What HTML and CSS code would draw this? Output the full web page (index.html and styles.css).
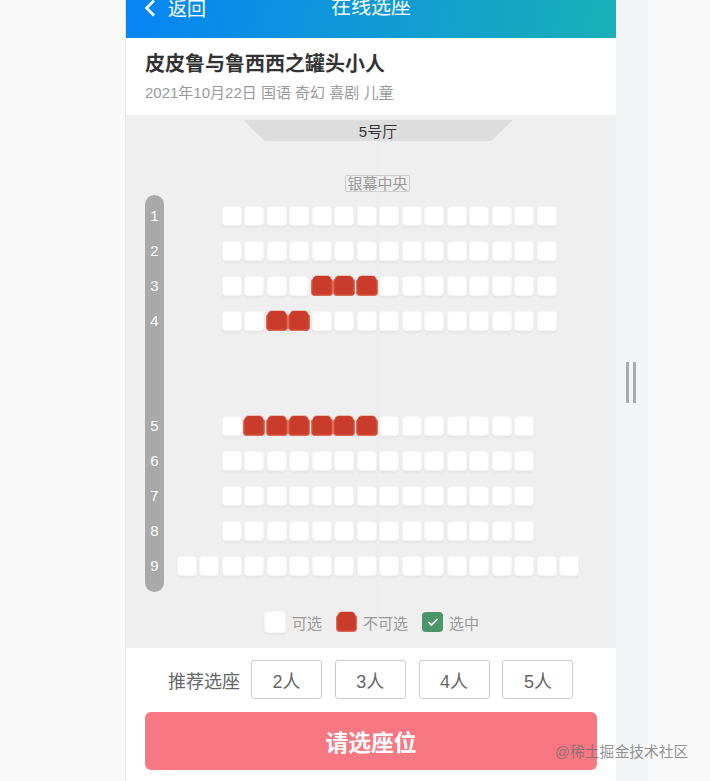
FILE: index.html
```html
<!DOCTYPE html>
<html lang="zh-CN">
  <head>
    <meta charset="UTF-8" />
    <meta name="viewport" content="width=device-width, initial-scale=1.0" />
    <title>在线选座</title>
    <link rel="stylesheet" href="styles.css">
  </head>
  <body>
    <div class="page">
      <div class="phone">
        <header class="top-bar">
          <a class="back" href="#">
            <svg class="back-icon" viewBox="0 0 12 18" width="12" height="18">
              <path d="M10 1.500 2.500 9l7.500 7.500" fill="none" stroke="#fff" stroke-width="2.600" />
            </svg>
            返回
          </a>
          <div class="top-title">在线选座</div>
        </header>

        <section class="movie">
          <h1 class="movie-name">皮皮鲁与鲁西西之罐头小人</h1>
          <p class="movie-info">2021年10月22日 国语 奇幻 喜剧 儿童</p>
        </section>

        <section class="hall">
          <div class="hall-name">5号厅</div>
          <div class="center-line"></div>
          <div class="screen-row"><span class="screen-label">银幕中央</span></div>

          <div class="seat-map">
            <div class="row-numbers">
              <span>1</span><span>2</span><span>3</span><span>4</span>
              <span></span><span></span>
              <span>5</span><span>6</span><span>7</span><span>8</span><span>9</span>
            </div>
            <div class="rows">
              <!-- Row 1 -->
              <div class="row">
                <span class="seat"></span><span class="seat"></span><span class="seat"></span><span class="seat"></span><span class="seat"></span>
                <span class="seat"></span><span class="seat"></span><span class="seat"></span><span class="seat"></span><span class="seat"></span>
                <span class="seat"></span><span class="seat"></span><span class="seat"></span><span class="seat"></span><span class="seat"></span>
              </div>
              <!-- Row 2 -->
              <div class="row">
                <span class="seat"></span><span class="seat"></span><span class="seat"></span><span class="seat"></span><span class="seat"></span>
                <span class="seat"></span><span class="seat"></span><span class="seat"></span><span class="seat"></span><span class="seat"></span>
                <span class="seat"></span><span class="seat"></span><span class="seat"></span><span class="seat"></span><span class="seat"></span>
              </div>
              <!-- Row 3 -->
              <div class="row">
                <span class="seat"></span><span class="seat"></span><span class="seat"></span><span class="seat"></span><span class="seat taken"></span>
                <span class="seat taken"></span><span class="seat taken"></span><span class="seat"></span><span class="seat"></span><span class="seat"></span>
                <span class="seat"></span><span class="seat"></span><span class="seat"></span><span class="seat"></span><span class="seat"></span>
              </div>
              <!-- Row 4 -->
              <div class="row">
                <span class="seat"></span><span class="seat"></span><span class="seat taken"></span><span class="seat taken"></span><span class="seat"></span>
                <span class="seat"></span><span class="seat"></span><span class="seat"></span><span class="seat"></span><span class="seat"></span>
                <span class="seat"></span><span class="seat"></span><span class="seat"></span><span class="seat"></span><span class="seat"></span>
              </div>
              <div class="row"></div>
              <div class="row"></div>
              <!-- Row 5 -->
              <div class="row">
                <span class="seat"></span><span class="seat taken"></span><span class="seat taken"></span><span class="seat taken"></span><span class="seat taken"></span>
                <span class="seat taken"></span><span class="seat taken"></span><span class="seat"></span><span class="seat"></span><span class="seat"></span>
                <span class="seat"></span><span class="seat"></span><span class="seat"></span><span class="seat"></span>
              </div>
              <!-- Row 6 -->
              <div class="row">
                <span class="seat"></span><span class="seat"></span><span class="seat"></span><span class="seat"></span><span class="seat"></span>
                <span class="seat"></span><span class="seat"></span><span class="seat"></span><span class="seat"></span><span class="seat"></span>
                <span class="seat"></span><span class="seat"></span><span class="seat"></span><span class="seat"></span>
              </div>
              <!-- Row 7 -->
              <div class="row">
                <span class="seat"></span><span class="seat"></span><span class="seat"></span><span class="seat"></span><span class="seat"></span>
                <span class="seat"></span><span class="seat"></span><span class="seat"></span><span class="seat"></span><span class="seat"></span>
                <span class="seat"></span><span class="seat"></span><span class="seat"></span><span class="seat"></span>
              </div>
              <!-- Row 8 -->
              <div class="row">
                <span class="seat"></span><span class="seat"></span><span class="seat"></span><span class="seat"></span><span class="seat"></span>
                <span class="seat"></span><span class="seat"></span><span class="seat"></span><span class="seat"></span><span class="seat"></span>
                <span class="seat"></span><span class="seat"></span><span class="seat"></span><span class="seat"></span>
              </div>
              <!-- Row 9 is the long one, it starts two seats further left -->
              <div class="row row-long">
                <span class="seat"></span><span class="seat"></span><span class="seat"></span><span class="seat"></span><span class="seat"></span><span class="seat"></span>
                <span class="seat"></span><span class="seat"></span><span class="seat"></span><span class="seat"></span><span class="seat"></span><span class="seat"></span>
                <span class="seat"></span><span class="seat"></span><span class="seat"></span><span class="seat"></span><span class="seat"></span><span class="seat"></span>
              </div>
            </div>
          </div>

          <div class="legend">
            <div class="legend-item"><span class="seat"></span><span class="legend-text">可选</span></div>
            <div class="legend-item"><span class="seat taken"></span><span class="legend-text">不可选</span></div>
            <div class="legend-item">
              <span class="seat chosen">
                <svg viewBox="0 0 12 10" width="12" height="10">
                  <path d="M1.500 5 4.500 8 10.500 2" fill="none" stroke="#fff" stroke-width="1.600" />
                </svg>
              </span>
              <span class="legend-text">选中</span>
            </div>
          </div>
        </section>

        <section class="bottom">
          <div class="recommend">
            <span class="recommend-label">推荐选座</span>
            <button class="count-btn">2人</button>
            <button class="count-btn">3人</button>
            <button class="count-btn">4人</button>
            <button class="count-btn">5人</button>
          </div>
          <button class="submit-btn">请选座位</button>
        </section>
      </div>

      <div class="side-strip">
        <div class="drag-handle"></div>
      </div>
    </div>

    <div class="watermark">@稀土掘金技术社区</div>
  </body>
</html>
```

FILE: styles.css
```css
* {
  margin: 0;
  padding: 0;
  box-sizing: border-box;
  font-family: "Liberation Sans", "Noto Sans CJK SC", sans-serif;
}

html,
body {
  height: 100%;
  overflow: hidden;
}

body {
  background: #f9f9fa;
}

.page {
  display: flex;
  height: 781px;
  padding-left: 125px;
}

.phone {
  width: 491px;
  height: 781px;
  background: #fff;
  border-left: 1px solid #e9e9e9;
}

/* Top bar, its upper part is scrolled away */
.top-bar {
  position: relative;
  display: flex;
  height: 38px;
  padding-left: 18px;
  overflow: hidden;
  background: linear-gradient(100deg, #0684f6, #19b0b6);
  color: #fff;
  font-size: 19px;
}

.back {
  display: flex;
  align-items: center;
  gap: 12px;
  height: 15px;
  color: #fff;
  text-decoration: none;
}

.back-icon {
  flex: none;
}

.top-title {
  position: absolute;
  top: -4px;
  left: 205px;
  font-size: 20px;
  line-height: 22px;
}

/* Movie info */
.movie {
  height: 77px;
  padding: 12px 19px 0;
}

.movie-name {
  font-size: 20px;
  font-weight: 700;
  line-height: 28px;
  color: #333;
}

.movie-info {
  margin-top: 4px;
  font-size: 15px;
  line-height: 21px;
  color: #999;
}

/* Hall */
.hall {
  position: relative;
  height: 533px;
  padding-top: 5px;
  background: #efefef;
}

.hall-name {
  width: 270px;
  height: 21px;
  margin-left: 117px;
  background: #ddd;
  clip-path: polygon(0 0, 100% 0, 92% 100%, 8% 100%);
  font-size: 15px;
  line-height: 24px;
  text-align: center;
  color: #333;
}

.center-line {
  position: absolute;
  top: 26px;
  bottom: 30px;
  left: 251px;
  border-left: 1px dashed #e9e9e9;
}

.screen-row {
  display: flex;
  margin-top: 34px;
  padding-left: 219px;
}

.screen-label {
  width: 65px;
  height: 17px;
  border: 1px solid #ccc;
  border-radius: 2px;
  font-size: 15px;
  line-height: 15px;
  text-align: center;
  white-space: nowrap;
  color: #999;
}

.seat-map {
  position: relative;
  display: flex;
  margin-top: 3px;
  padding-left: 19px;
}

.row-numbers {
  display: flex;
  flex-direction: column;
  width: 19px;
  height: 397px;
  padding-top: 3px;
  background: #a9a9a9;
  border-radius: 10px;
}

.row-numbers span {
  height: 35px;
  font-size: 15px;
  line-height: 35px;
  text-align: center;
  color: #fff;
}

.rows {
  display: flex;
  flex-direction: column;
  padding-top: 3px;
  padding-left: 58.500px;
}

.row {
  display: flex;
  gap: 4.500px;
  align-items: center;
  height: 35px;
}

.row-long {
  margin-left: -45px;
}

.seat {
  position: relative;
  display: flex;
  flex: none;
  align-items: center;
  justify-content: center;
  width: 18px;
  height: 18px;
  background: #fff;
  border-radius: 3px;
  box-shadow: 0 0 0 1px #f5f5f5, 0 2px 2px 1px #e5e5e5;
}

/* Taken seat: back rest over a wider, lighter base */
.seat.taken {
  width: 22px;
  height: 20px;
  margin: 0 -2px;
  background: none;
  box-shadow: none;
}

.seat.taken::before {
  content: "";
  position: absolute;
  right: 0;
  bottom: 0;
  left: 0;
  height: 16px;
  background: #c93c2b;
  border: 1px solid #dd6a52;
  border-top: none;
  border-radius: 3px 3px 4px 4px;
}

.seat.taken::after {
  content: "";
  position: absolute;
  top: 0;
  right: 2px;
  bottom: 2px;
  left: 2px;
  background: #c93c2b;
  border-radius: 4px;
  box-shadow: 0 0 0 1px rgba(221, 106, 82, 0.35);
}

.seat.chosen {
  width: 21px;
  height: 20px;
  background: #4a9668;
  border-radius: 4px;
  box-shadow: none;
}

/* Legend */
.legend {
  display: flex;
  margin-top: 19px;
  padding-left: 139px;
}

.legend-item {
  display: flex;
  align-items: center;
  height: 22px;
  margin-right: 14px;
}

.legend-item .seat {
  width: 20px;
  height: 20px;
  margin: 0 6px 0 0;
}

.legend-item .seat.taken {
  width: 21px;
}

.legend-item .seat.chosen {
  width: 21px;
}

.legend-text {
  font-size: 15px;
  color: #999;
}

.legend-item:first-child .seat {
  margin-right: 7px;
}

/* Bottom */
.bottom {
  padding: 12px 18px 0 19px;
}

.recommend {
  display: flex;
  align-items: center;
  padding-left: 23px;
}

.recommend-label {
  width: 83px;
  font-size: 18px;
  color: #666;
}

.count-btn {
  width: 71px;
  height: 39px;
  margin-right: 12.800px;
  background: #fff;
  border: 1px solid #ccc;
  border-radius: 3px;
  font-size: 18px;
  color: #666;
}

.submit-btn {
  display: block;
  width: 452px;
  height: 58px;
  margin-top: 13px;
  background: #f77783;
  border: none;
  border-radius: 6px;
  font-size: 22.800px;
  font-weight: 700;
  color: #fff;
}

/* Strip beside the phone */
.side-strip {
  position: relative;
  width: 32px;
  background: #f3f4f5;
}

.drag-handle {
  position: absolute;
  top: 362px;
  left: 10px;
  width: 10px;
  height: 41px;
  border-left: 3px solid #aaa;
  border-right: 3px solid #aaa;
}

.watermark {
  position: absolute;
  top: 742px;
  left: 555px;
  font-size: 14.800px;
  line-height: 20px;
  white-space: nowrap;
  color: rgba(110, 110, 110, 0.75);
}
```
